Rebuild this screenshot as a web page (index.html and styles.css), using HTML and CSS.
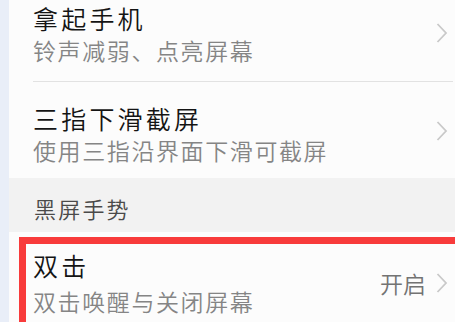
FILE: index.html
```html
<!DOCTYPE html>
<html lang="zh-CN">
<head>
<meta charset="utf-8">
<link rel="stylesheet" href="styles.css">
</head>
<body>
<div class="page">
  <div class="side"></div>
  <div class="main">
    <div class="row row-first">
      <div class="row-inner divided">
        <div class="texts">
          <div class="title">拿起手机</div>
          <div class="sub">铃声减弱、点亮屏幕</div>
        </div>
        <svg class="chev" viewBox="0 0 12 20" width="12" height="20"><polyline points="1.5,1 10,10 1.5,19" fill="none" stroke="#c9c9c9" stroke-width="1.8"/></svg>
      </div>
    </div>
    <div class="row row-second">
      <div class="row-inner">
        <div class="texts">
          <div class="title">三指下滑截屏</div>
          <div class="sub">使用三指沿界面下滑可截屏</div>
        </div>
        <svg class="chev" viewBox="0 0 12 20" width="12" height="20"><polyline points="1.5,1 10,10 1.5,19" fill="none" stroke="#c9c9c9" stroke-width="1.8"/></svg>
      </div>
    </div>
    <div class="section">黑屏手势</div>
    <div class="row row-third">
      <div class="row-inner">
        <div class="texts">
          <div class="title">双击</div>
          <div class="sub">双击唤醒与关闭屏幕</div>
        </div>
        <span class="value">开启</span>
        <svg class="chev" viewBox="0 0 12 20" width="12" height="20"><polyline points="1.5,1 10,10 1.5,19" fill="none" stroke="#c9c9c9" stroke-width="1.8"/></svg>
      </div>
    </div>
  </div>
  <div class="highlight"></div>
</div>
</body>
</html>
```

FILE: styles.css
```css
html, body {
  margin: 0;
  padding: 0;
}
body {
  width: 455px;
  height: 322px;
  overflow: hidden;
  background: #fcfcfc;
  font-family: "Noto Sans CJK SC", "Noto Sans", sans-serif;
}
.page {
  position: relative;
  display: flex;
  height: 322px;
  overflow: hidden;
}
.side {
  width: 9px;
  flex: none;
  background: #e9eef8;
}
.main {
  flex: 1;
  display: flex;
  flex-direction: column;
  background: #fcfcfc;
  overflow: hidden;
}
.row {
  flex: none;
  padding-left: 24px;
  padding-right: 2px;
}
.row-inner {
  display: flex;
  align-items: flex-start;
  height: 100%;
  box-sizing: border-box;
}
.divided {
  border-bottom: 1px solid #e2e2e2;
}
.row-first {
  height: 82px;
}
.row-first .row-inner {
  padding-top: 2px;
}
.row-first .chev {
  margin-top: 21px;
}
.row-second {
  height: 96px;
}
.row-second .row-inner {
  padding-top: 20px;
}
.row-second .chev {
  margin-top: 19px;
}
.row-third {
  height: 90px;
}
.row-third .row-inner {
  padding-top: 17px;
}
.row-third .sub {
  margin-top: 4px;
}
.row-third .value {
  margin-top: 18px;
}
.row-third .chev {
  margin-top: 24px;
}
.texts {
  flex: 1;
  display: flex;
  flex-direction: column;
}
.title {
  font-size: 25px;
  line-height: 32px;
  font-weight: 350;
  color: #141414;
  letter-spacing: 3.2px;
}
.sub {
  font-size: 23px;
  line-height: 32px;
  font-weight: 350;
  color: #858585;
  letter-spacing: 1.6px;
}
.value {
  font-size: 23px;
  line-height: 32px;
  font-weight: 350;
  color: #737373;
  margin-right: 10px;
}
.chev {
  flex: none;
  margin-right: 5px;
}
.section {
  flex: none;
  height: 54px;
  background: #f2f2f2;
  padding-left: 25px;
  padding-top: 16px;
  box-sizing: border-box;
  font-size: 22px;
  line-height: 28px;
  font-weight: 350;
  color: #4a4a4a;
  letter-spacing: 2.2px;
}
.highlight {
  position: absolute;
  left: 19px;
  top: 237px;
  right: 0;
  bottom: 0;
  border-top: 7px solid #f83b3b;
  border-left: 7px solid #f83b3b;
}
```
